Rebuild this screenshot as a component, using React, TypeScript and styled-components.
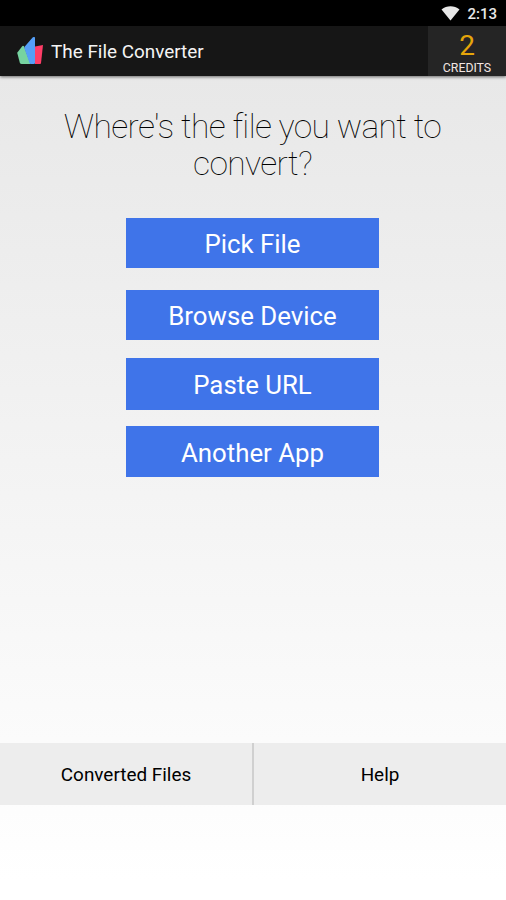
import React from "react";
import styled, { createGlobalStyle } from "styled-components";

const GlobalStyle = createGlobalStyle`
  *, *::before, *::after { box-sizing: border-box; }
  body { margin: 0; }
  button { border: 0; padding: 0; font: inherit; color: inherit; cursor: pointer; }
`;

const Screen = styled.div`
  width: 506px;
  height: 900px;
  display: flex;
  flex-direction: column;
  overflow: hidden;
  font-family: Roboto, "Liberation Sans", sans-serif;
  background: linear-gradient(#e8e8e8 76px, #ffffff 880px);
`;

const StatusBar = styled.div`
  height: 26px;
  flex: none;
  display: flex;
  justify-content: flex-end;
  align-items: center;
  gap: 7px;
  padding: 0 9px 0 0;
  background: #000;
  color: #e8e8e8;
`;

const Clock = styled.span`
  padding-top: 1px;
  font-size: 15px;
  font-weight: 500;
  line-height: 18px;
`;

const AppBar = styled.header`
  height: 50px;
  flex: none;
  display: flex;
  align-items: center;
  background: #161616;
  box-shadow: 0 1px 3px rgba(0, 0, 0, 0.55);
`;

const Logo = styled.svg`
  width: 28px;
  height: 28px;
  margin-left: 16px;
`;

const AppTitle = styled.h1`
  flex: 1;
  margin: 2px 0 0 7px;
  font-size: 18.9px;
  line-height: 24px;
  font-weight: 400;
  color: #f4f4f4;
  white-space: nowrap;
`;

const Credits = styled.div`
  width: 78px;
  height: 50px;
  display: flex;
  flex-direction: column;
  align-items: center;
  background: #252525;
`;

const CreditCount = styled.span`
  margin-top: 4px;
  font-size: 28px;
  line-height: 31px;
  color: #e5a50a;
`;

const CreditLabel = styled.span`
  font-size: 12.3px;
  line-height: 14px;
  color: #f2e6e2;
`;

const Content = styled.main`
  height: 667px;
  flex: none;
  display: flex;
  flex-direction: column;
  align-items: center;
  padding-right: 1px;
`;

const Question = styled.h2`
  width: 420px;
  margin: 32px 0 36px;
  font-size: 33.6px;
  line-height: 37px;
  font-weight: 100;
  letter-spacing: -0.64px;
  text-align: center;
  color: #000;
`;

const SourceButton = styled.button<{ $height: number; $gap: number }>`
  width: 253px;
  height: ${(p) => p.$height}px;
  margin-bottom: ${(p) => p.$gap}px;
  flex: none;
  background: #3f74e9;
  && {
    color: #fff;
    font-size: 25.8px;
    line-height: 30px;
    padding: 2px 0 0 0;
  }
`;

const BottomBar = styled.nav`
  height: 62px;
  flex: none;
  display: grid;
  grid-template-columns: 254px 252px;
`;

const BottomButton = styled.button<{ $divided?: boolean }>`
  background: #ededed;
  && {
    border-right: ${(p) => (p.$divided ? "2px solid #d0d0d0" : "0")};
    color: #000;
    font-size: 18.9px;
    line-height: 24px;
    padding: 2px 0 0 0;
  }
`;

const sources = [
  { label: "Pick File", height: 50, gap: 22 },
  { label: "Browse Device", height: 50, gap: 18 },
  { label: "Paste URL", height: 52, gap: 16 },
  { label: "Another App", height: 51, gap: 0 },
];

export default function App() {
  return (
    <>
      <GlobalStyle />
      <Screen>
        <StatusBar>
          <svg width="19" height="15" viewBox="0 0 19 15">
            <path d="M0.5 3.4C5.9-.8 13.1-.8 18.5 3.4L9.5 14.5Z" fill="#e8e8e8" />
          </svg>
          <Clock>2:13</Clock>
        </StatusBar>
        <AppBar>
          <Logo viewBox="16 37 28 28">
            <path d="M43 44.9L41 63.2Q40.8 64 40 64H35V46.6Z" fill="#ff3d67" />
            <path d="M17.2 52.8L22.2 46.2Q23 45.3 24 46.2L30.6 64H21.5Q20.4 64 19.9 63Z" fill="#76d3a0" />
            <path d="M24.6 46.8L32.6 37.4Q34.8 36.2 35 38V63Q35 64 34 64H31Q29.8 64 29.5 63L24.3 48Z" fill="#559ff8" />
          </Logo>
          <AppTitle>The File Converter</AppTitle>
          <Credits>
            <CreditCount>2</CreditCount>
            <CreditLabel>CREDITS</CreditLabel>
          </Credits>
        </AppBar>
        <Content>
          <Question>Where's the file you want to convert?</Question>
          {sources.map((s) => (
            <SourceButton key={s.label} $height={s.height} $gap={s.gap}>
              {s.label}
            </SourceButton>
          ))}
        </Content>
        <BottomBar>
          <BottomButton $divided>Converted Files</BottomButton>
          <BottomButton>Help</BottomButton>
        </BottomBar>
      </Screen>
    </>
  );
}
